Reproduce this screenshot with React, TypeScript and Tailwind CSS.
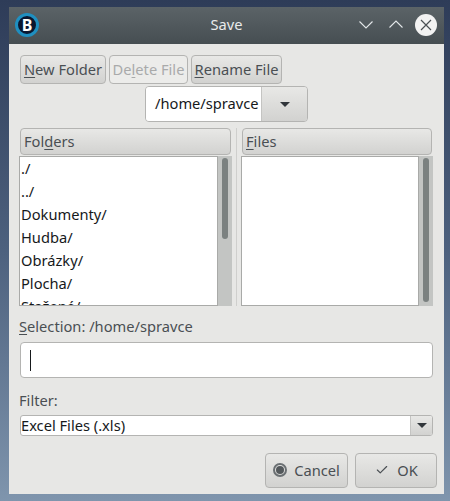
import { Check } from 'lucide-react';

const folders = ['./', '../', 'Dokumenty/', 'Hudba/', 'Obrázky/', 'Plocha/', 'Stažené/'];

function Caret() {
  return <span className="block w-0 h-0 border-x-[5px] border-x-transparent border-t-[5px] border-t-[#31363b]" />;
}

function Btn({ w, disabled, children }: { w: string; disabled?: boolean; children: React.ReactNode }) {
  return (
    <div className={`${w} h-[29px] pb-[2px] flex items-center justify-center rounded-[4px] border border-[#b4b4b2] ${disabled ? 'bg-[#ececea] text-[#a9aaaa]' : 'bg-gradient-to-b from-[#e8e8e6] to-[#d2d2d0] text-[#4a4f53]'}`}>
      <span>{children}</span>
    </div>
  );
}

function Scroll({ thumb }: { thumb: string }) {
  return (
    <div className="w-[14px] h-[150px] bg-[#c3c5c3] flex justify-center pt-[2px]">
      <div className={`${thumb} w-[6px] rounded-[3px] bg-[#7b8180]`} />
    </div>
  );
}

export default function App() {
  return (
    <div className="w-[450px] h-[501px] overflow-hidden pt-[7px] pl-[9px] bg-gradient-to-b from-[#2e3c58] via-[#4d617e] to-[#7f95ad] font-['Noto_Sans',sans-serif] text-[14.67px]">
      <div className="w-[435px] h-[487px] bg-[#e7e7e5]">
        <div className="h-[37px] pb-[4px] relative flex items-center justify-center bg-gradient-to-b from-[#5b6367] to-[#464e52] text-[#e9ebeb]">
          <div className="absolute left-[6px] top-[6px] w-[24px] h-[24px] rounded-full bg-[#0a1730] border-[3px] border-[#1f8fc0] flex items-center justify-center">
            <span className="text-white text-[16px] font-bold leading-none">B</span>
          </div>
          Save
          <div className="absolute right-[7px] top-[6px] flex items-center gap-[6px]">
            <svg width="24" height="24" viewBox="0 0 24 24" fill="none" stroke="#e4e8ea" strokeWidth="1.1">
              <path d="M5.5 8.5L12 15L18.5 8.5" />
            </svg>
            <svg width="24" height="24" viewBox="0 0 24 24" fill="none" stroke="#e4e8ea" strokeWidth="1.1">
              <path d="M5.5 14.5L12 8L18.5 14.5" />
            </svg>
            <div className="w-[22px] h-[22px] rounded-full bg-[#f2f2f2] flex items-center justify-center ml-[1px]">
              <svg width="14" height="14" viewBox="0 0 14 14" fill="none" stroke="#4a4f53" strokeWidth="1.2">
                <path d="M2 2L12 12M12 2L2 12" />
              </svg>
            </div>
          </div>
        </div>

        <div className="pl-[11px] pt-[11px]">
          <div className="flex gap-[3px]">
            <Btn w="w-[86px]"><u className="underline-offset-2">N</u>ew Folder</Btn>
            <Btn w="w-[79px]" disabled>De<u className="underline-offset-2">l</u>ete File</Btn>
            <Btn w="w-[91px]"><u className="underline-offset-2">R</u>ename File</Btn>
          </div>

          <div className="flex ml-[125px] mt-[2px] h-[36px] w-[163px] rounded-[4px] border border-[#b4b4b2] overflow-hidden">
            <div className="w-[115px] bg-white text-[#16191b] flex items-center pl-[9px] pb-[2px]">/home/spravce</div>
            <div className="flex-1 bg-gradient-to-b from-[#e8e8e6] to-[#d2d2d0] border-l border-[#c4c4c2] flex items-center justify-center"><Caret /></div>
          </div>

          <div className="flex mt-[6px] -ml-[1px]">
            <div className="w-[213px]">
              <div className="ml-[1px] w-[211px] h-[27px] pb-[2px] flex items-center pl-[3px] rounded-[4px] border border-[#b4b4b2] bg-gradient-to-b from-[#e8e8e6] to-[#d2d2d0] text-[#4a4f53]">
                <span>Fol<u className="underline-offset-2">d</u>ers</span>
              </div>
              <div className="flex mt-[1px]">
                <div className="w-[199px] h-[150px] overflow-hidden bg-white border border-[#a9aaa8] text-[#16191b] pl-[1px]">
                  {folders.map((f) => (
                    <div key={f} className="h-[23px] leading-[22px]">{f}</div>
                  ))}
                </div>
                <Scroll thumb="h-[81px]" />
              </div>
            </div>
            <div className="w-px h-[178px] bg-[#cfcfcd] ml-[4px] mr-[4px]" />
            <div>
              <div className="ml-[1px] w-[190px] h-[27px] pb-[2px] flex items-center pl-[3px] rounded-[4px] border border-[#b4b4b2] bg-gradient-to-b from-[#e8e8e6] to-[#d2d2d0] text-[#4a4f53]">
                <span><u className="underline-offset-2">F</u>iles</span>
              </div>
              <div className="flex mt-[1px]">
                <div className="w-[178px] h-[150px] bg-white border border-[#a9aaa8]" />
                <Scroll thumb="h-[144px]" />
              </div>
            </div>
          </div>

          <div className="mt-[10px] -ml-[1px] h-[20px] leading-[20px] text-[#4a4f53]"><u className="underline-offset-2">S</u>election: /home/spravce</div>
          <div className="mt-[6px] w-[413px] h-[36px] rounded-[4px] border border-[#b4b4b2] bg-white flex items-center pl-[9px]">
            <div className="w-px h-[21px] bg-[#16191b]" />
          </div>
          <div className="mt-[12px] -ml-[1px] h-[20px] leading-[20px] text-[#4a4f53]">Filter:</div>
          <div className="mt-[5px] w-[413px] h-[21px] rounded-[3px] border border-[#b4b4b2] bg-white flex items-center overflow-hidden">
            <div className="flex-1 text-[#16191b] leading-[19px]">Excel Files (.xls)</div>
            <div className="w-[22px] h-full bg-gradient-to-b from-[#e8e8e6] to-[#d2d2d0] border-l border-[#c4c4c2] flex items-center justify-center"><Caret /></div>
          </div>

          <div className="flex gap-[7px] ml-[245px] mt-[17px]">
            <div className="w-[83px] h-[35px] pb-[1px] rounded-[4px] border border-[#b4b4b2] bg-gradient-to-b from-[#e8e8e6] to-[#d2d2d0] flex items-center justify-center gap-[7px] text-[#4a4f53]">
              <span className="w-[14px] h-[14px] rounded-full border-2 border-[#6a6f72] flex items-center justify-center">
                <span className="w-[8px] h-[8px] rounded-full bg-[#53585b]" />
              </span>
              Cancel
            </div>
            <div className="w-[82px] h-[35px] pb-[1px] pl-[1px] rounded-[4px] border border-[#b4b4b2] bg-gradient-to-b from-[#e8e8e6] to-[#d2d2d0] flex items-center justify-center gap-[8px] text-[#4a4f53]">
              <Check size={14} strokeWidth={2} />
              OK
            </div>
          </div>
        </div>
      </div>
    </div>
  );
}
